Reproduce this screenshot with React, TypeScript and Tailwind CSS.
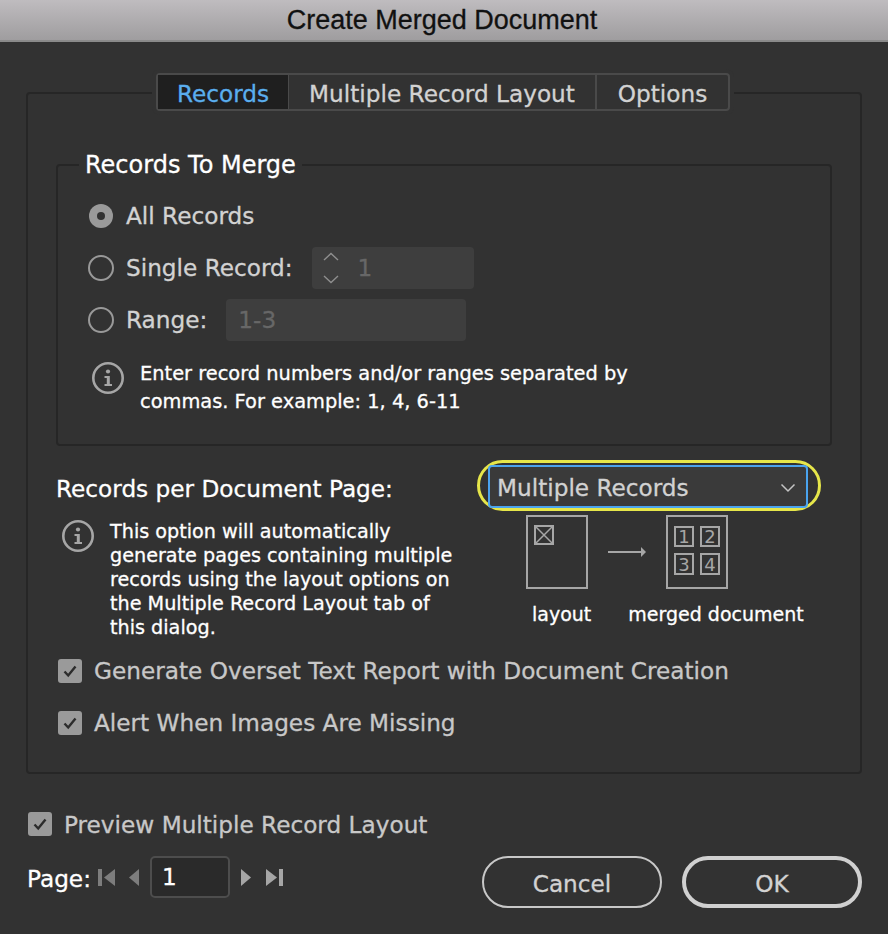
import type { ReactNode } from 'react';

const uiFont = "font-['DejaVu_Sans',sans-serif]";

function Radio({ checked }: { checked?: boolean }) {
  if (checked) {
    return (
      <span className="ml-px flex items-center justify-center w-6 h-6 rounded-full bg-[#9a9a9a] shrink-0">
        <span className="w-2 h-2 rounded-full bg-[#323232]"></span>
      </span>
    );
  }
  return <span className="w-[26px] h-[26px] rounded-full border-2 border-[#999999] shrink-0"></span>;
}

function CheckBox() {
  return (
    <span className="flex items-center justify-center w-6 h-6 rounded-[3px] bg-[#9a9a9a] shrink-0">
      <svg width="16" height="16" viewBox="0 0 16 16" fill="none">
        <path d="M2.5 8.5 L6.2 12.5 L13.5 3.5" stroke="#2c2c2c" strokeWidth="2.4" />
      </svg>
    </span>
  );
}

function InfoIcon() {
  return (
    <svg width="32" height="32" viewBox="0 0 32 32" fill="none" className="shrink-0">
      <circle cx="16" cy="16" r="14.7" stroke="#a6a6a6" strokeWidth="2.6" />
      <circle cx="16" cy="9.5" r="2.1" fill="#a6a6a6" />
      <path d="M12.5 14 H17.8 V22 H20 V24 H12.5 V22 H14.8 V16 H12.5 Z" fill="#a6a6a6" />
    </svg>
  );
}

function Row({ children, className }: { children: ReactNode; className: string }) {
  return <div className={`flex items-center ${className}`}>{children}</div>;
}

function LayoutDiagram() {
  return (
    <svg width="204" height="76" viewBox="0 0 204 76" fill="none" className="block">
      <rect x="1" y="1" width="60" height="72" stroke="#a6a6a6" strokeWidth="2" />
      <rect x="9" y="11" width="18" height="18" stroke="#a6a6a6" strokeWidth="2" />
      <path d="M9 11 L27 29 M27 11 L9 29" stroke="#a6a6a6" strokeWidth="1.5" />
      <path d="M82 37 H118" stroke="#a6a6a6" strokeWidth="2" />
      <path d="M115 32 L120 37 L115 42 Z" fill="#a6a6a6" />
      <rect x="141" y="1" width="60" height="72" stroke="#a6a6a6" strokeWidth="2" />
      <rect x="149" y="12" width="18" height="19" stroke="#a6a6a6" strokeWidth="2" />
      <rect x="175" y="12" width="18" height="19" stroke="#a6a6a6" strokeWidth="2" />
      <rect x="149" y="39" width="18" height="20" stroke="#a6a6a6" strokeWidth="2" />
      <rect x="175" y="39" width="18" height="20" stroke="#a6a6a6" strokeWidth="2" />
      <g fill="#a6a6a6" fontFamily="DejaVu Sans, sans-serif" fontSize="18" textAnchor="middle">
        <text x="158" y="28">1</text>
        <text x="184" y="28">2</text>
        <text x="158" y="56">3</text>
        <text x="184" y="56">4</text>
      </g>
    </svg>
  );
}

export default function App() {
  return (
    <div className={`w-[888px] h-[934px] bg-[#323232] overflow-hidden flex flex-col [-webkit-text-stroke:0.3px] ${uiFont}`}>
      <div className="h-[42px] shrink-0 flex items-center justify-center bg-gradient-to-b from-[#bfbcbf] to-[#9f9d9f] border-b-2 border-[#8a8a8a] text-[27px] text-[#111111] font-['Liberation_Sans',sans-serif]">
        <span className="-ml-[4px]">Create Merged Document</span>
      </div>

      <div className="mt-[50px] ml-[26px] w-[836px] h-[682px] shrink-0 border-2 border-[#262626] rounded-[4px] flex flex-col">
        <div className="-mt-[21px] ml-[128px] w-[574px] h-[38px] shrink-0 flex border-2 border-[#4a4a4a] rounded-[4px] bg-[#323232] text-[23.2px] ring-4 ring-[#323232]">
          <div className="w-[131px] pt-[4px] flex items-center justify-center bg-[#1f1f1f] text-[#5aaeee] border-r border-[#4a4a4a]">Records</div>
          <div className="w-[308px] pt-[4px] flex items-center justify-center text-[#d2d2d2] border-r-2 border-[#4a4a4a]">Multiple Record Layout</div>
          <div className="flex-1 pt-[4px] flex items-center justify-center text-[#d2d2d2]">Options</div>
        </div>

        <div className="mt-[53px] ml-[28px] w-[776px] h-[282px] shrink-0 border-2 border-[#262626] rounded-[4px] pl-[30px] pr-[29px]">
          <div className="-mt-[15px] -ml-[9px] w-fit px-[6px] bg-[#323232] text-[24px] leading-[28px] text-white">Records To Merge</div>
          <Row className="mt-[24px] h-[26px] gap-[13px] text-[23.2px] text-[#d2d2d2]">
            <Radio checked />
            <span>All Records</span>
          </Row>
          <Row className="mt-[26px] h-[26px] gap-[12px] text-[23.2px] text-[#d2d2d2]">
            <Radio />
            <span>Single Record:</span>
            <div className="ml-[7px] w-[162px] h-[42px] rounded-[4px] bg-[#3e3e3e] flex items-center pl-[11px] gap-[19px] text-[#676767]">
              <svg width="16" height="32" viewBox="0 0 16 32" fill="none">
                <path d="M1 8 L8 1.5 L15 8 M1 24 L8 30.5 L15 24" stroke="#8f8f8f" strokeWidth="1.4" />
              </svg>
              <span>1</span>
            </div>
          </Row>
          <Row className="mt-[26px] h-[26px] gap-[12px] text-[23.2px] text-[#d2d2d2]">
            <Radio />
            <span>Range:</span>
            <div className="ml-[7px] w-[240px] h-[42px] rounded-[4px] bg-[#3e3e3e] flex items-center pl-3 text-[#676767]">1-3</div>
          </Row>
          <div className="mt-[29px] ml-[4px] flex gap-[16px]">
            <InfoIcon />
            <div className="w-[520px] -mt-[2px] text-[19.4px] leading-[28px] text-white">
              Enter record numbers and/or ranges separated by commas. For example: 1, 4, 6-11
            </div>
          </div>
        </div>

        <div className="relative mt-[16px] ml-[29px] h-[50px] pt-[4px] shrink-0 flex items-center">
          <span className="-ml-px text-[23.2px] text-white">Records per Document Page:</span>
          <div className="absolute left-[420px] -top-[2px] w-[344px] h-[51px] rounded-full border-[3px] border-[#e6e64a]"></div>
          <div className="absolute left-[431px] top-[3px] w-[320px] h-[43px] rounded-[4px] border-2 border-[#4aa3ee] bg-[#3a3a3a] flex items-center justify-between pt-[3px] pl-[7px] pr-[10px] text-[23.2px] text-[#d2d2d2]">
            <span>Multiple Records</span>
            <svg width="16" height="10" viewBox="0 0 16 10" fill="none">
              <path d="M1.5 1.5 L8 8 L14.5 1.5" stroke="#c4c4c4" strokeWidth="1.5" />
            </svg>
          </div>
        </div>

        <div className="ml-[34px] flex h-[127px] shrink-0">
          <div className="flex gap-[16px] w-[436px]">
            <div className="mt-[8px]"><InfoIcon /></div>
            <div className="w-[352px] text-[19.2px] leading-[24px] text-white pt-[8px]">
              This option will automatically generate pages containing multiple records using the layout options on the Multiple Record Layout tab of this dialog.
            </div>
          </div>
          <div className="ml-[28px] pt-[3px]">
            <LayoutDiagram />
            <div className="mt-[9px] flex text-[19px] text-white whitespace-nowrap">
              <span className="ml-[6px]">layout</span>
              <span className="ml-[37px]">merged document</span>
            </div>
          </div>
        </div>

        <Row className="mt-[20px] ml-[30px] gap-[12px] h-6 text-[23.2px] text-[#c8c8c8]">
          <CheckBox />
          <span>Generate Overset Text Report with Document Creation</span>
        </Row>
        <Row className="mt-[28px] ml-[30px] gap-[12px] h-6 text-[23.2px] text-[#c8c8c8]">
          <CheckBox />
          <span>Alert When Images Are Missing</span>
        </Row>
      </div>

      <Row className="mt-[38px] ml-[28px] gap-[12px] h-6 text-[23.2px] text-[#c8c8c8]">
        <CheckBox />
        <span className="pt-[3px]">Preview Multiple Record Layout</span>
      </Row>

      <div className="mt-[20px] ml-[27px] mr-[26px] flex items-start">
        <span className="mt-[6px] w-[71px] text-[23.2px] text-white">Page:</span>
        <div className="flex items-center h-[42px] gap-[14px]">
          <svg width="17" height="17" viewBox="0 0 17 17" fill="#7d7d7d"><rect x="0" y="0" width="4" height="17" /><path d="M17 0 V17 L6 8.5 Z" /></svg>
          <svg width="10" height="17" viewBox="0 0 10 17" fill="#7d7d7d"><path d="M10 0 V17 L0 8.5 Z" /></svg>
        </div>
        <div className="ml-[11px] w-[80px] h-[42px] rounded-[5px] border-2 border-[#4d4d4d] bg-[#2a2a2a] flex items-center pl-[10px] text-[23.2px] text-white">1</div>
        <div className="ml-[11px] flex items-center h-[42px] gap-[15px]">
          <svg width="10" height="17" viewBox="0 0 10 17" fill="#a6a6a6"><path d="M0 0 V17 L10 8.5 Z" /></svg>
          <svg width="17" height="17" viewBox="0 0 17 17" fill="#a6a6a6"><path d="M0 0 V17 L11 8.5 Z" /><rect x="13" y="0" width="4" height="17" /></svg>
        </div>
        <button className="ml-auto w-[180px] h-[52px] pt-[4px] rounded-full border-2 border-[#c8c8c8] text-[23.2px] text-[#d2d2d2]">Cancel</button>
        <button className="ml-[20px] w-[180px] h-[52px] pt-[4px] rounded-full border-4 border-[#d0d0d0] text-[23.2px] text-[#d2d2d2]">OK</button>
      </div>
    </div>
  );
}
